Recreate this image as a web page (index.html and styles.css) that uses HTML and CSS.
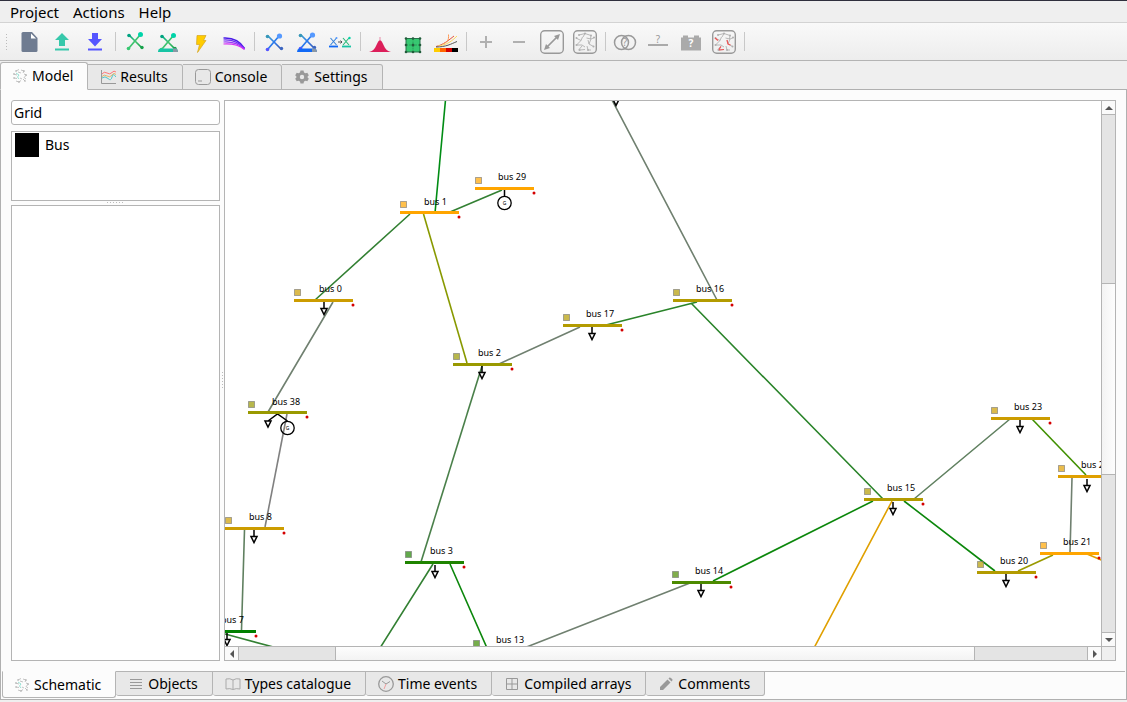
FILE: index.html
```html
<!DOCTYPE html>
<html lang="en">
<head>
<meta charset="utf-8">
<title>Grid editor</title>
<link rel="stylesheet" href="styles.css">
</head>
<body>
<svg class="defs" aria-hidden="true">
  <defs>
    <linearGradient id="greenMix" x1="0" y1="0" x2="1" y2="1"><stop offset="0" stop-color="#00a887"/><stop offset=".5" stop-color="#41c46e"/><stop offset="1" stop-color="#16a04a"/></linearGradient>
    <linearGradient id="blueMix" x1="0" y1="0" x2="1" y2="1"><stop offset="0" stop-color="#3fa0c8"/><stop offset=".5" stop-color="#2a78ee"/><stop offset="1" stop-color="#3c5cae"/></linearGradient>
    <g id="crossGreen">
      <path d="M6 5 18.500 17.500M17 5 6 18" fill="none" stroke="url(#greenMix)" stroke-width="1.700"/>
      <circle cx="6" cy="5.500" r="1.800" fill="#00a381"/><circle cx="17.500" cy="4.500" r="2.500" fill="#00d4aa"/>
      <circle cx="5.500" cy="18.500" r="1.800" fill="#37c871"/><circle cx="19" cy="17.500" r="1.700" fill="#16a04a"/>
    </g>
    <g id="crossBlue">
      <path d="M6 6 19 19M17 6 6 19" fill="none" stroke="url(#blueMix)" stroke-width="1.700"/>
      <circle cx="5.500" cy="6.500" r="1.800" fill="#3797b8"/><circle cx="17.500" cy="6" r="2.600" fill="#5599ff"/>
      <circle cx="5.500" cy="19.500" r="1.800" fill="#5555ff"/><circle cx="19.500" cy="18.500" r="1.700" fill="#3c65c0"/>
    </g>
    <g id="mesh" fill="none" stroke="currentColor" stroke-width=".9">
      <path d="M6 5 12 3.500 10 7M12 3.500 18 5.500 17.500 9M3 8 8 10.500 3.500 15H9M8 10.500 9.500 7M13.500 8 18 9 21.500 7.500M15 10 16 14 20.500 16.500M18 9 16 14M6 19.500 9 16M7 20 12 19.500M14 16 15 20 18 20M9 15 12 17"/>
      <g fill="currentColor" stroke="none"><circle cx="6" cy="5" r="1"/><circle cx="12" cy="3.500" r="1"/><circle cx="18" cy="5.500" r="1"/><circle cx="3.500" cy="8" r="1"/><circle cx="3.500" cy="15" r="1"/><circle cx="21" cy="7.500" r="1"/><circle cx="20.500" cy="16.500" r="1"/><circle cx="6.500" cy="20" r="1"/><circle cx="15" cy="20" r="1"/></g>
    </g>
    <g id="miniMesh" fill="none" stroke="#b4b4b4" stroke-width=".8">
      <path d="M4 3 7 1.500M9 2 12 3 11 5M1.500 6 5 7M2 10 5 10.500M4 13 7 14 9 12.500M11 11 13 13M12 6 14.500 7 12 9.500 14 11M6 4 9 5M8 10 10 11"/>
      <path d="M4 5 7 7 5.500 9 7 11" stroke="#7fdcca"/>
      <g fill="#aaa" stroke="none"><circle cx="4" cy="3" r=".8"/><circle cx="12" cy="3" r=".8"/><circle cx="2" cy="6" r=".8"/><circle cx="2" cy="10" r=".8"/><circle cx="14" cy="7" r=".8"/><circle cx="13" cy="13" r=".8"/><circle cx="7" cy="14" r=".8"/></g>
    </g>
    <g id="bus">
      <rect width="59" height="3" y="-1" fill="currentColor"/>
      <rect x=".5" y="-10.500" width="6" height="6" fill="currentColor" fill-opacity=".7" stroke="#777" stroke-opacity=".6"/>
      <circle cx="59" cy="5" r="1.500" fill="#d40000"/>
    </g>
    <g id="load"><path d="M0 2V8M-3 8.500H3L0 14.500Z" fill="#fff" stroke="#000" stroke-width="1.500"/></g>
    <g id="gen"><circle r="6.700" fill="none" stroke="#000" stroke-width="1.300"/><text class="gen-label" text-anchor="middle" y="2">G</text></g>
  </defs>
</svg>

<nav class="menubar">
  <button>Project</button><button>Actions</button><button>Help</button>
</nav>

<div class="toolbar" role="toolbar">
  <span class="grip"></span>
  <button aria-label="New"><svg viewBox="0 0 24 24"><path d="M6 2H15L20.500 8V20.500Q20.500 22 19 22H6Q4.500 22 4.500 20.500V3.500Q4.500 2 6 2Z" fill="#6f7c91"/><path d="M14 3.500V8.500H19Z" fill="#fff"/></svg></button>
  <button aria-label="Open"><svg viewBox="0 0 24 24" fill="#37c8ab"><path d="M12 3 19 10H15V16H9V10H5ZM5 18.500H19V20.500H5Z"/></svg></button>
  <button aria-label="Save"><svg viewBox="0 0 24 24" fill="#5555ff"><path d="M9 3H15V9H19L12 16.500 5 9H9ZM5 18.500H19V20.500H5Z"/></svg></button>
  <span class="sep"></span>
  <button aria-label="Power flow"><svg viewBox="0 0 24 24"><use href="#crossGreen"/></svg></button>
  <button aria-label="Optimal power flow"><svg viewBox="0 0 24 24"><use href="#crossGreen" y="1"/><path d="M4 18.500H20Q22 19 22 21.500V22H2V21.500Q2 19 4 18.500Z" fill="#17c4a4"/><path d="M17 18.500H20Q22 19 22 22H17Z" fill="#8b98a5"/></svg></button>
  <button aria-label="Short circuit"><svg viewBox="0 0 24 24"><path d="M8 5.500H17L14.500 10.500H17L8.500 22.500 10.500 14.500H7.500Z" fill="#ffcc00" stroke="#d5a520" stroke-width=".7"/></svg></button>
  <button aria-label="Continuation power flow"><svg viewBox="0 0 24 24" fill="none"><path d="M1.500 8C11 7.500 18 11 22.500 18.500" stroke="#4a1ce8" stroke-width="1.500"/><path d="M1.500 10C10 9.500 17 12 22.500 19" stroke="#6d2cf4" stroke-width="1.200"/><path d="M1.500 12C10 11.500 16 13 22.500 19" stroke="#9c38fa" stroke-width="1.200"/><path d="M1.500 14C9 13.500 17 15 22.500 19.500" stroke="#d62ff4" stroke-width="1.200"/></svg></button>
  <span class="sep"></span>
  <button aria-label="Power flow time series"><svg viewBox="0 0 24 24"><use href="#crossBlue"/></svg></button>
  <button aria-label="Optimal time series"><svg viewBox="0 0 24 24"><use href="#crossBlue" y="-1"/><path d="M4 18.500H20Q22 19 22 22H2Q2 19 4 18.500Z" fill="#1169f6"/><path d="M17 18.500H20Q22 19 22 22H17Z" fill="#8b98a5"/></svg></button>
  <button aria-label="Copy results"><svg viewBox="0 0 24 24" fill="none"><path d="M2.500 8 8.500 15M8.500 8 2.500 15" stroke="#3984d8" stroke-width="1.100"/><path d="M1 16.500H10" stroke="#1169f6" stroke-width="1.800"/><circle cx="8.500" cy="8" r="1" fill="#5599ff"/><path d="M10 12H14M12.500 10.500 14 12 12.500 13.500" stroke="#444" stroke-width=".9"/><path d="M15 8 21 15M21 8 15 15" stroke="#27b978" stroke-width="1.100"/><path d="M14 16.500H23" stroke="#17c4a4" stroke-width="1.800"/><circle cx="21.500" cy="8" r="1.200" fill="#00d4aa"/></svg></button>
  <span class="sep"></span>
  <button aria-label="Stochastic power flow"><svg viewBox="0 0 24 24"><path d="M1 22Q6 21 8 16Q10.500 10 12 10Q13.500 10 16 16Q18 21 23 22Z" fill="#dc1f5a"/><path d="M12 7V11" stroke="#e889a8"/></svg></button>
  <button aria-label="Clustering"><svg viewBox="0 0 24 24"><path d="M5 8.500H19V22H5Z" fill="#37c871" stroke="#26734a"/><path d="M12 8.500V22M5 15H19" stroke="#2ca05a" stroke-dasharray="2 1"/><g fill="#225c3b"><circle cx="5" cy="8.500" r="1.300"/><circle cx="12" cy="8.500" r="1.300"/><circle cx="19" cy="8.500" r="1.300"/><circle cx="5" cy="15" r="1.300"/><circle cx="12" cy="15" r="1.500"/><circle cx="19" cy="15" r="1.300"/><circle cx="5" cy="22" r="1.300"/><circle cx="12" cy="22" r="1.300"/><circle cx="19" cy="22" r="1.300"/></g></svg></button>
  <button aria-label="Cascade"><svg viewBox="0 0 24 24" fill="none"><path d="M2 16.500C9 15 15 10 20 6" stroke="#e3543c"/><path d="M9 14C13 12 15 11 14.500 4.500" stroke="#ff9955"/><path d="M4 16C13 15 18 11 23 6" stroke="#ffd75c"/><path d="M2 17C12 17 17 14 23 11.500" stroke="#555"/><path d="M0 18H6V22H0Z" fill="#ffcc00"/><path d="M6 18H12V22H6Z" fill="#ff6600"/><path d="M12 18H18V22H12Z" fill="#d40000"/><path d="M18 18H24V22H18Z" fill="#000"/></svg></button>
  <span class="sep"></span>
  <button aria-label="Larger"><svg viewBox="0 0 24 24"><path d="M6 12H18M12 6V18" stroke="#b0b0b0" stroke-width="2"/></svg></button>
  <button aria-label="Smaller"><svg viewBox="0 0 24 24"><path d="M6 12H18" stroke="#b0b0b0" stroke-width="2"/></svg></button>
  <button aria-label="Fit view"><svg viewBox="0 0 24 24"><rect x=".7" y=".7" width="22.600" height="22.600" rx="4" fill="none" stroke="#999" stroke-width="1.400"/><path d="M6 18 18 6" stroke="#999" stroke-width="1.700"/><path d="M20 4 14 6 18 10ZM4 20 6 14 10 18Z" fill="#999"/></svg></button>
  <button aria-label="Automatic layout"><svg viewBox="0 0 24 24" color="#b0b0b0"><rect x=".7" y=".7" width="22.600" height="22.600" rx="4" fill="none" stroke="#999" stroke-width="1.400"/><use href="#mesh"/></svg></button>
  <span class="sep"></span>
  <button aria-label="Compare"><svg viewBox="0 0 24 24"><g fill="none" stroke="#999" stroke-width="1.500"><circle cx="8.500" cy="12.500" r="7"/><circle cx="15.500" cy="12.500" r="7"/></g><text class="icon-text" x="12" y="16" text-anchor="middle">?</text></svg></button>
  <button aria-label="Bus information"><svg viewBox="0 0 24 24"><path d="M2 15H22" stroke="#aaa" stroke-width="2"/><text class="icon-text" x="12" y="13" text-anchor="middle">?</text></svg></button>
  <button aria-label="Storage"><svg viewBox="0 0 24 24"><path d="M2 7.500H4V5.500H9V7.500H15V5.500H20V7.500H22V20.500H2Z" fill="#aaa"/><text class="icon-text light" x="12" y="17" text-anchor="middle">?</text></svg></button>
  <button aria-label="Find islands"><svg viewBox="0 0 24 24" color="#b0b0b0"><rect x=".7" y=".7" width="22.600" height="22.600" rx="4" fill="none" stroke="#999" stroke-width="1.400"/><use href="#mesh"/><path d="M3 8 6 10.500M15 10 16 14 18.500 15M7 19.500 9 16.500M7 20 12 19.500" stroke="#f05555" stroke-width="1.200" fill="none"/></svg></button>
  <span class="sep"></span>
</div>

<div class="tabs top" role="tablist">
  <button class="tab active" role="tab" aria-selected="true"><svg viewBox="0 0 16 16"><use href="#miniMesh"/></svg>Model</button>
  <button class="tab" role="tab"><svg viewBox="0 0 16 16" fill="none"><path d="M1.500 1V14.500H16" stroke="#999"/><path d="M2 5Q4 2 7 4T12 3.500T16 3" stroke="#f77"/><path d="M2 7.500Q4 5 7 7T12 6T16 5.500" stroke="#e5b567"/><path d="M2 9Q5 6.500 8 9.500T12 8T16 8" stroke="#4fc6ca"/></svg>Results</button>
  <button class="tab" role="tab"><svg viewBox="0 0 16 16" fill="none" stroke="#999"><rect x=".5" y=".5" width="15" height="15" rx="3"/><path d="M3 12H7"/></svg>Console</button>
  <button class="tab" role="tab"><svg viewBox="0 0 16 16"><path d="M6.500 1.500H9.500L10 3.500 11.500 4.300 13.300 3.700 14.800 6.200 13.300 8 14.800 9.800 13.300 12.300 11.500 11.700 10 12.500 9.500 14.500H6.500L6 12.500 4.500 11.700 2.700 12.300 1.200 9.800 2.700 8 1.200 6.200 2.700 3.700 4.500 4.300 6 3.500ZM8 5.800A2.200 2.200 0 1 0 8 10.200A2.200 2.200 0 1 0 8 5.800Z" fill="#999" fill-rule="evenodd"/></svg>Settings</button>
</div>

<main class="pane">
  <div class="split">
    <aside class="side">
      <input class="field" type="text" value="Grid" aria-label="Grid name">
      <ul class="list types"><li><span class="swatch"></span>Bus</li></ul>
      <div class="split-dots row"></div>
      <div class="list props"></div>
    </aside>
    <div class="split-dots col"></div>
    <section class="view">
      <svg class="canvas" role="img" aria-label="Schematic">
        <g transform="translate(-225 -101)">
          <g class="branches">
            <path stroke="#008c14" d="M445.500 100 435 213"/>
            <path stroke="#338033" d="M450 212 502 190M410 214 315 300M433 564 380 648M225 634 277 648"/>
            <path stroke="#889900" d="M423.500 214 467 363"/>
            <path stroke="#708070" d="M333 302 268 412M499 364 580 327M612 100 717 300M1072 478 1070 553M690 583 524 648"/>
            <path stroke="#808080" d="M287 414 265 527"/>
            <path stroke="#608060" d="M244.500 530 241.500 630M914 499 1010 419"/>
            <path stroke="#4a804a" d="M482 366 421 562"/>
            <path stroke="#2a842a" d="M606 325 697 302M691 303 883 499"/>
            <path stroke="#0c870c" d="M873 501 713 581M904 501 995 571M450 564 487 648"/>
            <path stroke="#e0a000" d="M892 501 814 648M1087 554 1104 561"/>
            <path stroke="#409000" d="M1032 419 1086 475"/>
            <path stroke="#9a9a00" d="M1053 555 1018 571"/>
          </g>
          <g>
            <use href="#load" x="616" y="91"/>
            <use href="#load" x="324" y="300"/>
            <use href="#load" x="482" y="364"/>
            <use href="#load" x="592" y="325"/>
            <use href="#load" x="254" y="528"/>
            <use href="#load" x="227" y="631"/>
            <use href="#load" x="435" y="563"/>
            <use href="#load" x="701" y="582"/>
            <use href="#load" x="893" y="500"/>
            <use href="#load" x="1006" y="572"/>
            <use href="#load" x="1087" y="477"/>
            <use href="#load" x="1020" y="418"/>
            <path d="M504.500 190V196M268 421 277.500 414 287.500 421M265 421H271L268 427Z" fill="none" stroke="#000" stroke-width="1.500"/>
            <use href="#gen" x="504.500" y="203"/>
            <use href="#gen" x="287.500" y="428"/>
          </g>
          <g>
            <use href="#bus" x="475" y="188" color="#ffa500"/>
            <use href="#bus" x="400" y="212" color="#ffa500"/>
            <use href="#bus" x="294" y="300" color="#cc9c00"/>
            <use href="#bus" x="248" y="412" color="#999900"/>
            <use href="#bus" x="453" y="364" color="#999900"/>
            <use href="#bus" x="673" y="300" color="#b39b00"/>
            <use href="#bus" x="563" y="325" color="#b39b00"/>
            <use href="#bus" x="225" y="528" color="#cc9c00"/>
            <use href="#bus" x="197" y="631" color="#008000"/>
            <use href="#bus" x="405" y="562" color="#1f8400"/>
            <use href="#bus" x="473" y="651" color="#3c8a00"/>
            <use href="#bus" x="672" y="582" color="#4c8a00"/>
            <use href="#bus" x="864" y="499" color="#b39b00"/>
            <use href="#bus" x="977" y="572" color="#b39b00"/>
            <use href="#bus" x="1040" y="553" color="#ffa500"/>
            <use href="#bus" x="1058" y="476" color="#e0a000"/>
            <use href="#bus" x="991" y="418" color="#cc9c00"/>
          </g>
          <g class="labels">
            <text x="498" y="180">bus 29</text>
            <text x="424" y="205">bus 1</text>
            <text x="319" y="292">bus 0</text>
            <text x="272" y="405">bus 38</text>
            <text x="478" y="356">bus 2</text>
            <text x="696" y="292">bus 16</text>
            <text x="586" y="317">bus 17</text>
            <text x="249" y="520">bus 8</text>
            <text x="221" y="623">bus 7</text>
            <text x="430" y="554">bus 3</text>
            <text x="496" y="643">bus 13</text>
            <text x="695" y="574">bus 14</text>
            <text x="887" y="491">bus 15</text>
            <text x="1000" y="564">bus 20</text>
            <text x="1063" y="545">bus 21</text>
            <text x="1081" y="468">bus 22</text>
            <text x="1014" y="410">bus 23</text>
          </g>
        </g>
      </svg>
      <div class="scroll vertical">
        <button class="arrow" aria-label="Scroll up"><svg viewBox="0 0 8 4"><path d="M0 4 4 0 8 4Z"/></svg></button>
        <div class="track"><div class="thumb"></div></div>
        <button class="arrow" aria-label="Scroll down"><svg viewBox="0 0 8 4"><path d="M0 0 4 4 8 0Z"/></svg></button>
      </div>
      <div class="scroll horizontal">
        <button class="arrow" aria-label="Scroll left"><svg viewBox="0 0 4 8"><path d="M4 0 0 4 4 8Z"/></svg></button>
        <div class="track"><div class="thumb"></div></div>
        <button class="arrow" aria-label="Scroll right"><svg viewBox="0 0 4 8"><path d="M0 0 4 4 0 8Z"/></svg></button>
      </div>
      <div class="corner"></div>
    </section>
  </div>
  <div class="tabs bottom" role="tablist">
    <button class="tab active" role="tab" aria-selected="true"><svg viewBox="0 0 16 16"><use href="#miniMesh"/></svg>Schematic</button>
    <button class="tab" role="tab"><svg viewBox="0 0 16 16" stroke="#999"><path d="M2 3.500H14M2 6.500H14M2 9.500H14M2 12.500H14"/></svg>Objects</button>
    <button class="tab" role="tab"><svg viewBox="0 0 16 16" fill="none" stroke="#aaa"><path d="M8 4Q5 2 1 3V13Q5 12 8 13.500Q11 12 15 13V3Q11 2 8 4V13"/></svg>Types catalogue</button>
    <button class="tab" role="tab"><svg viewBox="0 0 16 16" fill="none" stroke="#999"><circle cx="8" cy="8" r="7.300" stroke-width="1.300"/><path d="M4 5 8 8 12 5.500"/><path d="M8 8 6 13" stroke="#f0a0a0"/></svg>Time events</button>
    <button class="tab" role="tab"><svg viewBox="0 0 16 16" fill="none" stroke="#999"><path d="M2.500 2.500H13.500V13.500H2.500ZM8 2.500V13.500M2.500 8H13.500"/></svg>Compiled arrays</button>
    <button class="tab" role="tab"><svg viewBox="0 0 16 16" fill="#999"><path d="M2 14V11L9.500 3.500 12.500 6.500 5 14ZM10.500 2.500 11.500 1.500Q12.500 1 14.500 3.500Q15 4 13.500 5.500Z"/></svg>Comments</button>
  </div>
</main>
</body>
</html>
```

FILE: styles.css
```css
* {
  box-sizing: border-box;
}

body {
  margin: 0;
  min-height: 100vh;
  display: flex;
  flex-direction: column;
  padding-bottom: 2px;
  background: #efefef;
  color: #000;
  font: 14px/20px "Noto Sans", "Open Sans", sans-serif;
}

button,
input {
  font: inherit;
  color: inherit;
}

button {
  border: 0;
  padding: 0;
  background: none;
}

.defs {
  position: absolute;
  width: 0;
  height: 0;
}

.menubar {
  display: flex;
  gap: 14px;
  height: 23px;
  padding: 0 10px;
  border-top: 1px solid #2f2f3d;
  border-bottom: 1px solid #d3d3d3;
  font-size: 15px;
}

.toolbar {
  display: flex;
  align-items: center;
  height: 38px;
  padding-left: 5px;
  border-bottom: 1px solid #b4b4b4;
  background: linear-gradient(#f9f9f9, #ededed);
}

.toolbar button {
  width: 33px;
  height: 32px;
  display: grid;
  place-items: center;
}

.toolbar svg {
  width: 24px;
  height: 24px;
}

.grip {
  width: 7px;
  height: 17px;
  background: radial-gradient(circle, #bbb 1px, transparent 1px) 0 0 / 3px 3px;
  background-clip: content-box;
  padding-right: 3px;
}

.sep {
  width: 7px;
  height: 19px;
  background: linear-gradient(#c8c8c8, #c8c8c8) 4px 0 / 1px 100% no-repeat;
}

.icon-text {
  font: 10px "Noto Sans", sans-serif;
  fill: #999;
}

.icon-text.light {
  fill: #fff;
  font-weight: bold;
}

.tabs {
  display: flex;
}

.tab {
  display: flex;
  align-items: center;
  gap: 4px;
  padding: 0 14px 0 12px;
  border: 1px solid #b4b4b4;
  background: #e8e8e8;
}

.tab svg {
  width: 16px;
  height: 16px;
}

.tab.active {
  padding-left: 11px;
  background: #fcfcfc;
}

.tabs.top {
  position: relative;
  z-index: 1;
  height: 29px;
  align-items: flex-end;
  margin-bottom: -1px;
}

.tabs.top .tab {
  height: 26px;
  border-left-width: 0;
  border-radius: 0 3px 0 0;
}

.tabs.top .active {
  height: 28px;
  border-left-width: 1px;
  border-bottom-color: #fcfcfc;
  border-radius: 3px 3px 0 0;
}

.pane {
  flex: 1;
  display: flex;
  flex-direction: column;
  padding-top: 10px;
  border: 1px solid #b0b0b0;
  background: #fcfcfc;
}

.split {
  flex: 1;
  display: grid;
  grid-template-columns: 209px 4px 1fr;
  padding: 0 10px;
}

.side {
  display: flex;
  flex-direction: column;
}

.field {
  width: 100%;
  height: 25px;
  padding: 0 2px;
  border: 1px solid #b4b4b4;
  border-radius: 3px;
  background: #fff;
}

.list {
  margin: 0;
  padding: 1px 3px;
  border: 1px solid #b4b4b4;
  background: #fff;
  list-style: none;
}

.types {
  height: 70px;
  margin-top: 6px;
}

.types li {
  display: flex;
  align-items: center;
  gap: 6px;
}

.swatch {
  width: 24px;
  height: 24px;
  background: #000;
}

.props {
  flex: 1;
}

.split-dots.row {
  width: 18px;
  height: 4px;
  margin: 0 auto;
  background: linear-gradient(90deg, #bbb 1px, transparent 1px) 0 1px / 3px 1px repeat-x;
}

.split-dots.col {
  width: 1px;
  height: 17px;
  align-self: center;
  justify-self: center;
  background: linear-gradient(#bbb 1px, transparent 1px) 0 0 / 1px 3px repeat-y;
}

.view {
  display: grid;
  grid-template: 1fr 14px / 1fr 14px;
  border: 1px solid #b4b4b4;
  background: #fff;
}

.canvas {
  display: block;
  width: 100%;
  height: 100%;
  min-height: 300px;
  overflow: hidden;
}

.branches {
  fill: none;
  stroke-width: 1.6px;
}

.labels {
  font: 9px "Noto Sans", "Open Sans", sans-serif;
  fill: #000;
}

.gen-label {
  font: 5px "Noto Sans", sans-serif;
}

.scroll {
  display: flex;
  background: #e4e4e4;
}

.track {
  flex: 1;
  display: flex;
}

.arrow {
  display: grid;
  place-items: center;
  background: #fafafa;
  border: 0 solid #b4b4b4;
}

.arrow svg {
  display: block;
  fill: #555;
}

.vertical {
  flex-direction: column;
  border-left: 1px solid #b4b4b4;
}

.vertical .track {
  flex-direction: column;
  padding-top: 168px;
}

.vertical .thumb {
  height: 192px;
  border: solid #b4b4b4;
  border-width: 1px 0;
  background: linear-gradient(90deg, #f3f3f3, #fdfdfd);
}

.vertical .arrow {
  height: 14px;
  border-bottom-width: 1px;
}

.vertical .arrow:last-child {
  border-width: 1px 0 0;
}

.vertical svg {
  width: 8px;
  height: 4px;
}

.horizontal {
  border-top: 1px solid #b4b4b4;
}

.horizontal .track {
  padding-left: 96px;
}

.horizontal .thumb {
  width: 640px;
  border: solid #b4b4b4;
  border-width: 0 1px;
  background: linear-gradient(#fdfdfd, #f3f3f3);
}

.horizontal .arrow {
  width: 14px;
  border-right-width: 1px;
}

.horizontal .arrow:last-child {
  border-width: 0 0 0 1px;
}

.horizontal svg {
  width: 4px;
  height: 8px;
}

.corner {
  border: solid #b4b4b4;
  border-width: 1px 0 0 1px;
  background: #efefef;
}

.tabs.bottom {
  height: 28px;
  margin: 10px 1px 0;
  align-items: flex-start;
  background: linear-gradient(#b4b4b4, #b4b4b4) 0 0 / 100% 1px no-repeat;
}

.tabs.bottom .tab {
  height: 25px;
  border-left-width: 0;
  border-radius: 0 0 3px 3px;
}

.tabs.bottom .active {
  height: 27px;
  border-left-width: 1px;
  border-top-color: #fcfcfc;
}
```
